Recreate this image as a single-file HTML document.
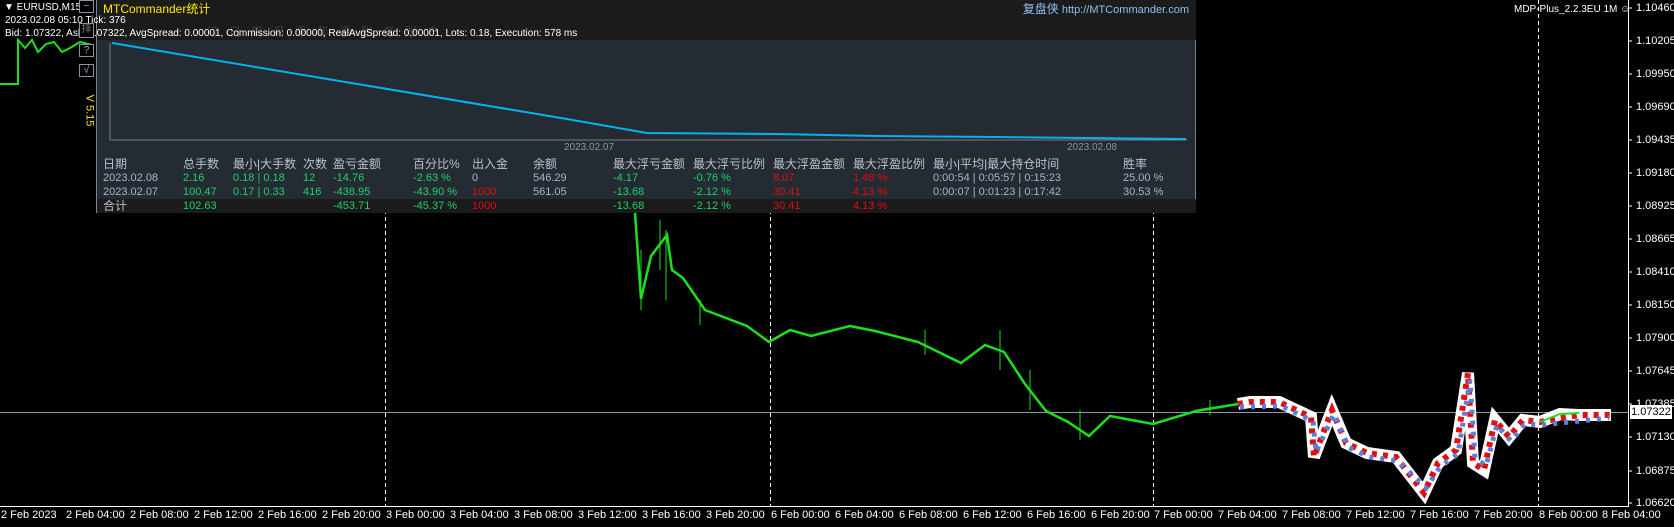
<!DOCTYPE html>
<html><head><meta charset="utf-8"><style>
html,body{margin:0;padding:0;background:#000;width:1674px;height:527px;overflow:hidden;position:relative;font-family:"Liberation Sans","Noto Sans CJK SC",sans-serif;}
.t{position:absolute;white-space:nowrap;font-size:11px;line-height:13px;color:#fff;z-index:5}
#panel{position:absolute;left:96px;top:0;width:1100px;height:213px;background:#252b33;border:1px solid #7a8594;border-top:none;box-sizing:border-box;z-index:2}
.p{position:absolute;white-space:nowrap;font-size:11px;line-height:13px;color:#a8b4c6}
.h{font-size:12px;color:#b8c2d0}
.g{color:#19d36a}.r{color:#e00d0d}.w{color:#a8b4c6}
.btn{position:absolute;left:79px;width:15px;height:13px;border:1px solid #8a94a0;box-sizing:border-box;color:#aab;font-size:10px;line-height:11px;text-align:center;background:#000;z-index:6}
.ax{position:absolute;left:1636px;font-size:11px;color:#fff;line-height:12px}
.bx{position:absolute;top:509px;font-size:11px;color:#fff;line-height:12px;white-space:nowrap}
</style></head><body>
<svg width="1674" height="527" style="position:absolute;left:0;top:0">
<g stroke="#fff" stroke-dasharray="4,3" stroke-width="1">
<line x1="385.5" y1="0" x2="385.5" y2="506"/><line x1="770.5" y1="0" x2="770.5" y2="506"/><line x1="1153.5" y1="0" x2="1153.5" y2="506"/><line x1="1538.5" y1="0" x2="1538.5" y2="506"/>
</g>
<line x1="0" y1="412.5" x2="1628" y2="412.5" stroke="#8a9aa8"/>
<line x1="0" y1="506.5" x2="1628" y2="506.5" stroke="#fff"/>
<line x1="1628.5" y1="0" x2="1628.5" y2="507" stroke="#fff"/>
<g stroke="#fff">
<line x1="1628" y1="8" x2="1632" y2="8"/><line x1="1628" y1="41" x2="1632" y2="41"/><line x1="1628" y1="74" x2="1632" y2="74"/><line x1="1628" y1="107" x2="1632" y2="107"/><line x1="1628" y1="140" x2="1632" y2="140"/><line x1="1628" y1="173" x2="1632" y2="173"/><line x1="1628" y1="206" x2="1632" y2="206"/><line x1="1628" y1="239" x2="1632" y2="239"/><line x1="1628" y1="272" x2="1632" y2="272"/><line x1="1628" y1="305" x2="1632" y2="305"/><line x1="1628" y1="338" x2="1632" y2="338"/><line x1="1628" y1="371" x2="1632" y2="371"/><line x1="1628" y1="404" x2="1632" y2="404"/><line x1="1628" y1="437" x2="1632" y2="437"/><line x1="1628" y1="471" x2="1632" y2="471"/><line x1="1628" y1="503" x2="1632" y2="503"/>
</g>
<polyline points="0,84 18,84 18,40 25,48 32,40 38,52 46,44 54,42 62,52 70,48 80,42 92,45" fill="none" stroke="#1be01b" stroke-width="2"/>
<polyline points="628,140 635,213 641,299 651,256 667,235 672,270 683,278 705,310 747,326 769,342 790,330 811,336 850,326 875,331 918,342 961,363 985,345 1004,352 1025,384 1046,411 1068,422 1089,436 1110,416 1153,424 1196,411 1238,404" fill="none" stroke="#1be01b" stroke-width="2.5"/>
<g stroke="#1be01b" stroke-width="1">
<line x1="641" y1="250" x2="641" y2="310"/><line x1="660" y1="220" x2="660" y2="270"/><line x1="666" y1="230" x2="666" y2="300"/><line x1="700" y1="300" x2="700" y2="325"/><line x1="925" y1="330" x2="925" y2="355"/><line x1="1000" y1="330" x2="1000" y2="370"/><line x1="1030" y1="370" x2="1030" y2="410"/><line x1="1080" y1="410" x2="1080" y2="440"/><line x1="1210" y1="400" x2="1210" y2="415"/>
</g>
<polyline points="1238,404 1250,402 1279,402 1311,417 1314,457 1332,410 1346,443 1367,453 1396,457 1424,493 1438,463 1456,450 1468,373 1473,463 1484,470 1495,420 1509,437 1523,420 1540,422 1560,414 1579,415 1611,415" fill="none" stroke="#fff" stroke-width="12"/>
<polyline points="1238,404 1250,402 1279,402 1311,417 1314,457 1332,410 1346,443 1367,453 1396,457 1424,493 1438,463 1456,450 1468,373 1473,463 1484,470 1495,420 1509,437 1523,420 1540,422 1579,415 1611,415" fill="none" stroke="#e01010" stroke-width="6" stroke-dasharray="5,6"/>
<polyline points="1240,407 1281,406 1313,421 1316,452 1334,414 1348,447 1369,457 1398,461 1426,488 1440,467 1458,454 1470,380 1475,458 1486,466 1497,425 1511,441 1525,424 1542,425 1609,418" fill="none" stroke="#5a7fe0" stroke-width="5" stroke-dasharray="4,7"/>
<polyline points="1153,424 1180,416 1200,410 1238,404" fill="none" stroke="#1be01b" stroke-width="2"/>
<polyline points="1540,422 1560,414 1579,413" fill="none" stroke="#1be01b" stroke-width="2"/>
</svg>

<div class="t" style="left:4px;top:1px;font-size:10px">▼ EURUSD,M15</div>
<div class="t" style="left:5px;top:14px;font-size:10px">2023.02.08 05:10 Tick: 376</div>
<div class="t" style="left:5px;top:27px;font-size:10px">Bid: 1.07322, Ask: 1.07322, AvgSpread: 0.00001, Commission: 0.00000, RealAvgSpread: 0.00001, Lots: 0.18, Execution: 578 ms</div>
<div class="btn" style="top:0">−</div>
<div class="btn" style="top:23px;height:15px;color:#777">择</div>
<div class="btn" style="top:44px">?</div>
<div class="btn" style="top:64px">√</div>
<div class="t" style="left:73px;top:104px;color:#ffea00;transform:rotate(90deg);font-size:11px">V 5.15</div>

<div id="panel">
<div style="position:absolute;left:0;top:0;width:1099px;height:40px;background:#1b1b1b"></div>
<div style="position:absolute;left:0;top:199px;width:1099px;height:14px;background:#1b1b1b"></div>
<svg width="1100" height="200" style="position:absolute;left:0;top:0">
<polyline points="13,43 13,140 1090,140" fill="none" stroke="#7c7c7c" stroke-width="1"/>
<polyline points="15,43 464,118 550,133 680,134 780,136 900,137 990,138 1089,139" fill="none" stroke="#00b4f0" stroke-width="2"/>
</svg>
<div class="p" style="left:6px;top:3px;font-size:12px;color:#ffea00">MTCommander统计</div>
<div class="p" style="right:6px;top:3px;color:#8cc0f0"><span style="font-size:12px">复盘侠</span> http://MTCommander.com</div>
<div class="p" style="left:110px;top:26px;color:#3a4048;font-size:12px;letter-spacing:10px">综日周月季年手账务账户</div>
<div class="p" style="left:467px;top:141px;color:#8894a4;font-size:10px">2023.02.07</div>
<div class="p" style="left:970px;top:141px;color:#8894a4;font-size:10px">2023.02.08</div>

<div class="p h" style="left:6px;top:158px">日期</div><div class="p h" style="left:86px;top:158px">总手数</div><div class="p h" style="left:136px;top:158px">最小|大手数</div><div class="p h" style="left:206px;top:158px">次数</div><div class="p h" style="left:236px;top:158px">盈亏金额</div><div class="p h" style="left:316px;top:158px">百分比%</div><div class="p h" style="left:375px;top:158px">出入金</div><div class="p h" style="left:436px;top:158px">余额</div><div class="p h" style="left:516px;top:158px">最大浮亏金额</div><div class="p h" style="left:596px;top:158px">最大浮亏比例</div><div class="p h" style="left:676px;top:158px">最大浮盈金额</div><div class="p h" style="left:756px;top:158px">最大浮盈比例</div><div class="p h" style="left:836px;top:158px">最小|平均|最大持仓时间</div><div class="p h" style="left:1026px;top:158px">胜率</div>

<div class="p w" style="left:6px;top:172px">2023.02.08</div><div class="p g" style="left:86px;top:172px">2.16</div><div class="p g" style="left:136px;top:172px">0.18 | 0.18</div><div class="p g" style="left:206px;top:172px">12</div><div class="p g" style="left:236px;top:172px">-14.76</div><div class="p g" style="left:316px;top:172px">-2.63 %</div><div class="p w" style="left:375px;top:172px">0</div><div class="p w" style="left:436px;top:172px">546.29</div><div class="p g" style="left:516px;top:172px">-4.17</div><div class="p g" style="left:596px;top:172px">-0.76 %</div><div class="p r" style="left:676px;top:172px">8.07</div><div class="p r" style="left:756px;top:172px">1.48 %</div><div class="p w" style="left:836px;top:172px">0:00:54 | 0:05:57 | 0:15:23</div><div class="p w" style="left:1026px;top:172px">25.00 %</div>

<div class="p w" style="left:6px;top:186px">2023.02.07</div><div class="p g" style="left:86px;top:186px">100.47</div><div class="p g" style="left:136px;top:186px">0.17 | 0.33</div><div class="p g" style="left:206px;top:186px">416</div><div class="p g" style="left:236px;top:186px">-438.95</div><div class="p g" style="left:316px;top:186px">-43.90 %</div><div class="p r" style="left:375px;top:186px">1000</div><div class="p w" style="left:436px;top:186px">561.05</div><div class="p g" style="left:516px;top:186px">-13.68</div><div class="p g" style="left:596px;top:186px">-2.12 %</div><div class="p r" style="left:676px;top:186px">30.41</div><div class="p r" style="left:756px;top:186px">4.13 %</div><div class="p w" style="left:836px;top:186px">0:00:07 | 0:01:23 | 0:17:42</div><div class="p w" style="left:1026px;top:186px">30.53 %</div>

<div class="p h" style="left:6px;top:200px">合计</div><div class="p g" style="left:86px;top:200px">102.63</div><div class="p g" style="left:236px;top:200px">-453.71</div><div class="p g" style="left:316px;top:200px">-45.37 %</div><div class="p r" style="left:375px;top:200px">1000</div><div class="p g" style="left:516px;top:200px">-13.68</div><div class="p g" style="left:596px;top:200px">-2.12 %</div><div class="p r" style="left:676px;top:200px">30.41</div><div class="p r" style="left:756px;top:200px">4.13 %</div>
</div>

<div class="t" style="left:1514px;top:3px;font-size:10px">MDP-Plus_2.2.3EU 1M ☺</div>

<div class="ax" style="top:2px">1.10460</div><div class="ax" style="top:35px">1.10205</div><div class="ax" style="top:68px">1.09950</div><div class="ax" style="top:101px">1.09690</div><div class="ax" style="top:134px">1.09435</div><div class="ax" style="top:167px">1.09180</div><div class="ax" style="top:200px">1.08925</div><div class="ax" style="top:233px">1.08665</div><div class="ax" style="top:266px">1.08410</div><div class="ax" style="top:299px">1.08150</div><div class="ax" style="top:332px">1.07900</div><div class="ax" style="top:365px">1.07645</div><div class="ax" style="top:398px">1.07385</div><div class="ax" style="top:431px">1.07130</div><div class="ax" style="top:465px">1.06875</div><div class="ax" style="top:497px">1.06620</div>
<div style="position:absolute;left:1630px;top:405px;width:42px;height:14px;background:#fff;color:#000;font-size:11px;line-height:14px;text-align:center">1.07322</div>

<div class="bx" style="left:1px">2 Feb 2023</div>
<div class="bx" style="left:66px">2 Feb 04:00</div><div class="bx" style="left:130px">2 Feb 08:00</div><div class="bx" style="left:194px">2 Feb 12:00</div><div class="bx" style="left:258px">2 Feb 16:00</div><div class="bx" style="left:322px">2 Feb 20:00</div><div class="bx" style="left:386px">3 Feb 00:00</div><div class="bx" style="left:450px">3 Feb 04:00</div><div class="bx" style="left:514px">3 Feb 08:00</div><div class="bx" style="left:578px">3 Feb 12:00</div><div class="bx" style="left:642px">3 Feb 16:00</div><div class="bx" style="left:706px">3 Feb 20:00</div><div class="bx" style="left:771px">6 Feb 00:00</div><div class="bx" style="left:835px">6 Feb 04:00</div><div class="bx" style="left:899px">6 Feb 08:00</div><div class="bx" style="left:963px">6 Feb 12:00</div><div class="bx" style="left:1027px">6 Feb 16:00</div><div class="bx" style="left:1091px">6 Feb 20:00</div><div class="bx" style="left:1154px">7 Feb 00:00</div><div class="bx" style="left:1218px">7 Feb 04:00</div><div class="bx" style="left:1282px">7 Feb 08:00</div><div class="bx" style="left:1346px">7 Feb 12:00</div><div class="bx" style="left:1410px">7 Feb 16:00</div><div class="bx" style="left:1474px">7 Feb 20:00</div><div class="bx" style="left:1539px">8 Feb 00:00</div><div class="bx" style="left:1602px">8 Feb 04:00</div>
</body></html>
